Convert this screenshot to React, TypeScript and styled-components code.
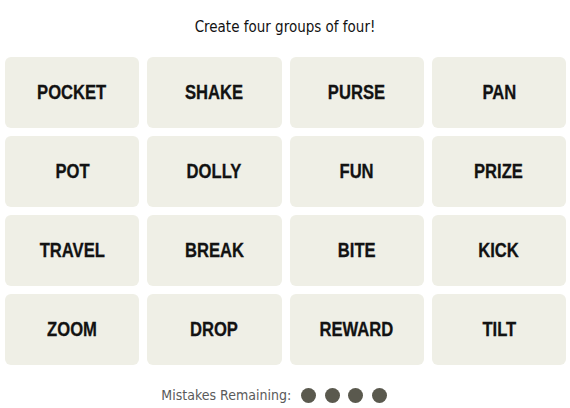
import React from 'react'
import styled, { createGlobalStyle } from 'styled-components'

const GlobalStyle = createGlobalStyle`
  html, body {
    margin: 0;
    padding: 0;
    background: #ffffff;
  }
  body {
    font-family: "DejaVu Sans Condensed", "Liberation Sans", sans-serif;
  }
`

const words = [
  'POCKET', 'SHAKE', 'PURSE', 'PAN',
  'POT', 'DOLLY', 'FUN', 'PRIZE',
  'TRAVEL', 'BREAK', 'BITE', 'KICK',
  'ZOOM', 'DROP', 'REWARD', 'TILT',
]

const Page = styled.div`
  width: 570px;
  height: 408px;
  display: flex;
  flex-direction: column;
  align-items: center;
  padding-top: 19px;
  box-sizing: border-box;
`

const Title = styled.p`
  margin: 0 0 21px;
  font-size: 15px;
  line-height: 17px;
  color: #121212;
`

const Board = styled.div`
  width: 561px;
  margin-left: 1px;
  display: grid;
  grid-template-columns: repeat(4, 1fr);
  grid-auto-rows: 71px;
  gap: 8px;
`

const Tile = styled.button`
  border: none;
  border-radius: 6px;
  background: #efefe6;
  color: #121212;
  display: flex;
  align-items: center;
  justify-content: center;
  padding: 0;
  cursor: pointer;
`

const Word = styled.span`
  font-family: "Liberation Sans", Arial, sans-serif;
  font-weight: 700;
  font-size: 20px;
  text-transform: uppercase;
  transform: scaleX(0.83);
  white-space: nowrap;
  -webkit-text-stroke: 0.3px #121212;
`

const Mistakes = styled.div`
  margin-top: 22px;
  margin-right: 22px;
  display: flex;
  align-items: center;
  gap: 10px;
  font-size: 14px;
  color: #5a5a5a;
`

const Dots = styled.div`
  display: flex;
  gap: 8.5px;
`

const Dot = styled.span`
  width: 15px;
  height: 15px;
  border-radius: 50%;
  background: #5a594e;
`

export default function App() {
  return (
    <>
      <GlobalStyle />
      <Page>
        <Title>Create four groups of four!</Title>
        <Board>
          {words.map(w => (
            <Tile key={w}>
              <Word>{w}</Word>
            </Tile>
          ))}
        </Board>
        <Mistakes>
          Mistakes Remaining:
          <Dots>
            {[0, 1, 2, 3].map(i => <Dot key={i} />)}
          </Dots>
        </Mistakes>
      </Page>
    </>
  )
}
